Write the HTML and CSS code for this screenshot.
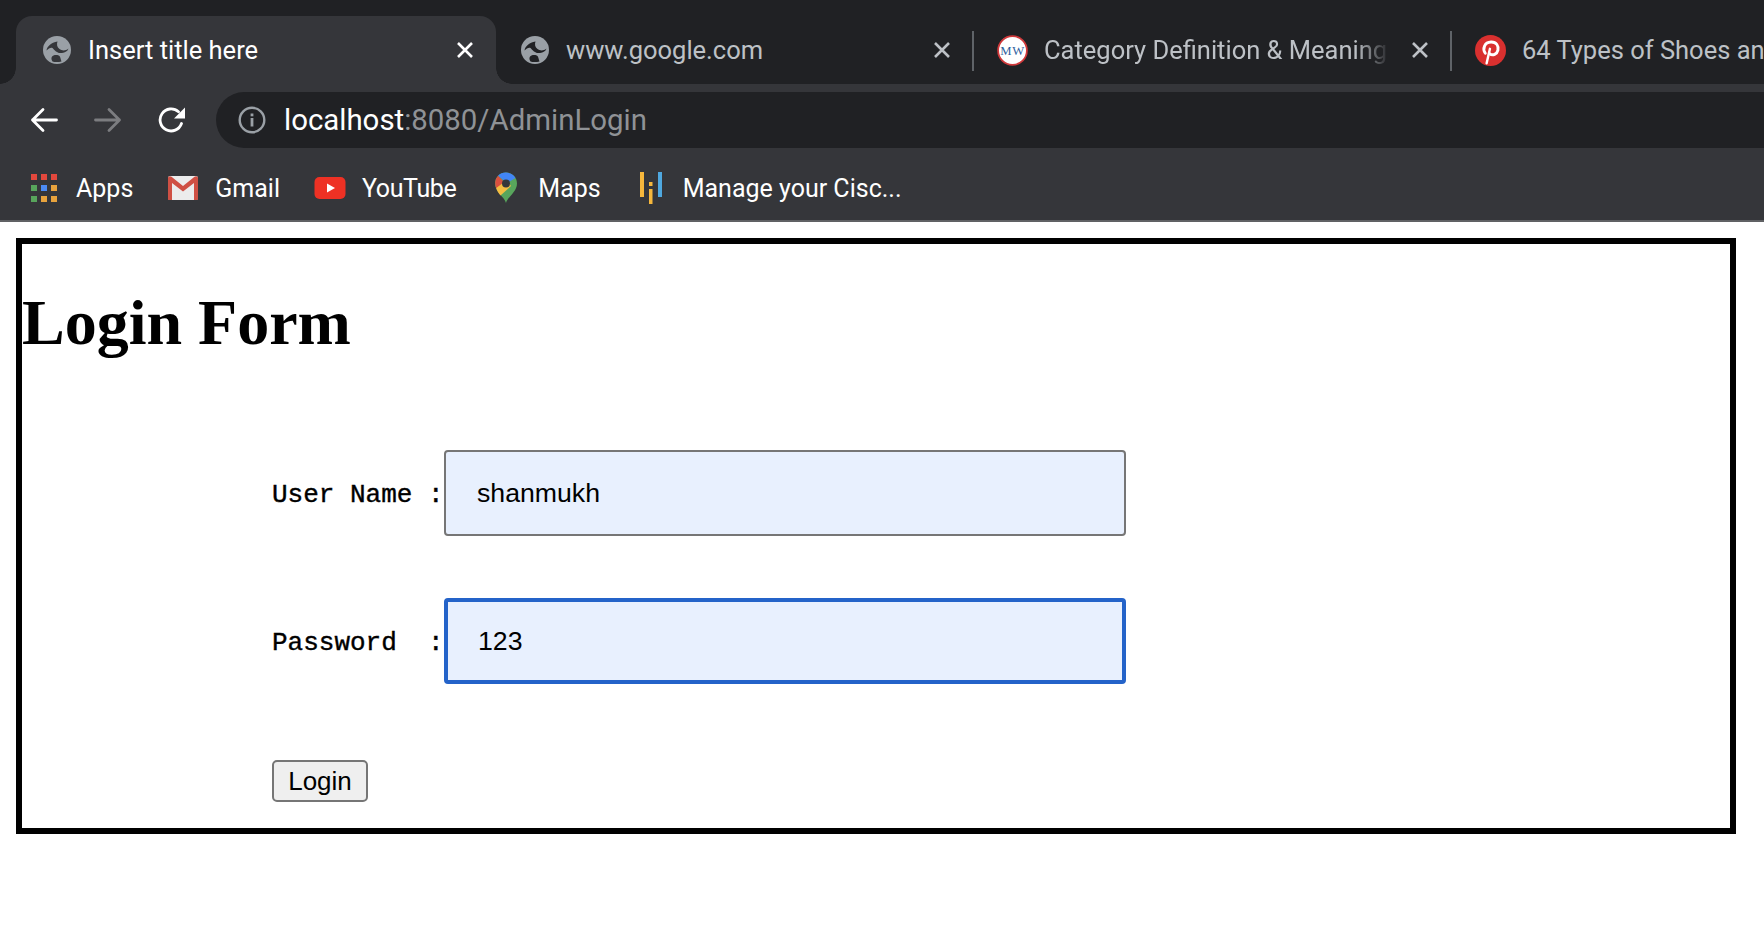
FILE: index.html
```html
<!DOCTYPE html>
<html lang="en">
<head>
    <meta charset="UTF-8">
    <meta name="viewport" content="width=device-width, initial-scale=1.0">
    <title>Insert title here</title>
    <link rel="stylesheet" href="styles.css">
</head>
<body>
    <svg class="defs" width="0" height="0">
        <symbol id="globe" viewBox="0 0 28 28">
            <circle cx="14" cy="14" r="14" fill="#9aa0a6"/>
            <path d="M3.500 14.500C4 10.500 8 6.500 14.500 5.500C13.500 8 14 11.500 16.500 13C18.500 14.500 22 15.500 25.500 12.500C25 15 22 16.500 19 17C15 17.800 11.500 14.500 9.500 12C8 11 5.500 12.500 3.500 14.500Z" fill="currentColor"/>
            <path d="M9.500 25.500C8 23 8 20.500 10.500 19.500C13 18.500 16 19.500 16.500 20C17.500 21 17.500 23 18.500 25.500C16 26 12 26.500 9.500 25.500Z" fill="currentColor"/>
        </symbol>
        <symbol id="close" viewBox="0 0 20 20">
            <path d="M3 3L17 17M17 3L3 17" fill="none" stroke="currentColor" stroke-width="2.600"/>
        </symbol>
    </svg>

    <header class="browser">
        <div class="tabstrip">
            <div class="tab tab-active">
                <svg class="favicon globe-dark-active"><use href="#globe"/></svg>
                <span class="tab-title">Insert title here</span>
                <svg class="tab-close"><use href="#close"/></svg>
            </div>
            <div class="tab tab-sep">
                <svg class="favicon globe-dark"><use href="#globe"/></svg>
                <span class="tab-title">www.google.com</span>
                <svg class="tab-close"><use href="#close"/></svg>
            </div>
            <div class="tab tab-sep">
                <svg class="favicon favicon-lg" viewBox="0 0 28 28">
                    <circle cx="14" cy="14" r="13" fill="#fff" stroke="#d0393b" stroke-width="1.600"/>
                    <text x="14" y="17.800" class="mw-text" text-anchor="middle">MW</text>
                </svg>
                <span class="tab-title tab-fade">Category Definition &amp; Meaning</span>
                <svg class="tab-close"><use href="#close"/></svg>
            </div>
            <div class="tab">
                <svg class="favicon favicon-lg" viewBox="0 0 28 28">
                    <circle cx="14" cy="14" r="14" fill="#d9302f"/>
                    <path d="M10.500 25.500L13.500 12.500" fill="none" stroke="#fff" stroke-width="2.200" stroke-linecap="round"/>
                    <path d="M9.300 16.500C6.500 12.500 8.500 6.500 14.500 6.300C19.500 6.200 21.500 10 20.700 13.700C20 17.200 16 19.200 13.200 16.800" fill="none" stroke="#fff" stroke-width="2.600" stroke-linecap="round"/>
                </svg>
                <span class="tab-title">64 Types of Shoes and</span>
            </div>
        </div>

        <div class="toolbar">
            <button class="nav-btn" type="button">
                <svg class="nav-icon" viewBox="0 0 28 28"><path d="M26.500 14H2.500M13 3.500L2.500 14L13 24.500" fill="none" stroke="#fff" stroke-width="2.800" stroke-linecap="round" stroke-linejoin="round"/></svg>
            </button>
            <button class="nav-btn" type="button">
                <svg class="nav-icon" viewBox="0 0 28 28"><path d="M1.500 14H25.500M15 3.500L25.500 14L15 24.500" fill="none" stroke="#7c7d80" stroke-width="2.800" stroke-linecap="round" stroke-linejoin="round"/></svg>
            </button>
            <button class="nav-btn" type="button">
                <svg class="nav-icon" viewBox="0 0 28 28">
                    <path d="M23.500 17.500A11 11 0 1 1 20.500 5.800" fill="none" stroke="#fff" stroke-width="2.800" stroke-linecap="round"/>
                    <path d="M27 1.500V12.500H16Z" fill="#fff"/>
                </svg>
            </button>
            <div class="omnibox">
                <svg class="info-icon" viewBox="0 0 28 28">
                    <circle cx="14" cy="14" r="12.300" fill="none" stroke="#9aa0a6" stroke-width="2.400"/>
                    <rect x="12.600" y="12" width="2.800" height="8.500" fill="#9aa0a6"/>
                    <rect x="12.600" y="7.500" width="2.800" height="2.800" fill="#9aa0a6"/>
                </svg>
                <span class="url"><span class="url-host">localhost</span>:8080/AdminLogin</span>
            </div>
        </div>

        <div class="bookmarks">
            <div class="bookmark">
                <svg class="bm-icon" viewBox="0 0 32 32">
                    <rect x="3" y="2" width="6" height="6" fill="#e2483d"/><rect x="13" y="2" width="6" height="6" fill="#e2483d"/><rect x="23" y="2" width="6" height="6" fill="#e2483d"/>
                    <rect x="3" y="13" width="6" height="6" fill="#58a55c"/><rect x="13" y="13" width="6" height="6" fill="#4c8bf5"/><rect x="23" y="13" width="6" height="6" fill="#e8a33d"/>
                    <rect x="3" y="24" width="6" height="6" fill="#58a55c"/><rect x="13" y="24" width="6" height="6" fill="#e8a33d"/><rect x="23" y="24" width="6" height="6" fill="#e8a33d"/>
                </svg>
                <span>Apps</span>
            </div>
            <div class="bookmark">
                <svg class="bm-icon" viewBox="0 0 32 32">
                    <rect x="1" y="4" width="30" height="24" rx="2" fill="#ececec"/>
                    <path d="M1 27V6C1 4.500 3 3.500 4.500 4.800L16 14L27.500 4.800C29 3.500 31 4.500 31 6V27C31 27.500 30.500 28 30 28H27V11L16 19.500L5 11V28H2C1.500 28 1 27.500 1 27Z" fill="#cf5044"/>
                </svg>
                <span>Gmail</span>
            </div>
            <div class="bookmark">
                <svg class="bm-icon" viewBox="0 0 32 32">
                    <rect x="0.500" y="5" width="31" height="22" rx="5" fill="#ee3124"/>
                    <path d="M13 11.500L21 16L13 20.500Z" fill="#fff"/>
                </svg>
                <span class="bm-tight">YouTube</span>
            </div>
            <div class="bookmark">
                <svg class="bm-icon" viewBox="0 0 32 32">
                    <path d="M16 31C14.500 25 5 20 5 11.500A11 11 0 0 1 27 11.500C27 20 17.500 25 16 31Z" fill="#58a55c"/>
                    <path d="M8 3.800A11 11 0 0 1 16 .500C20 .500 23.500 2.500 25.500 6L17 11Z" fill="#4285f4"/>
                    <path d="M8 3.800L14 10L6.800 17A11 11 0 0 1 8 3.800Z" fill="#d9503f"/>
                    <path d="M6.200 16L17 8L21 14L10.500 23.500C9 21.500 7 19 6.200 16Z" fill="#f4bd42"/>
                    <circle cx="16" cy="11.500" r="4" fill="#35363a"/>
                </svg>
                <span>Maps</span>
            </div>
            <div class="bookmark">
                <svg class="bm-icon" viewBox="0 0 32 32">
                    <rect x="5" y="0" width="4" height="25" fill="#f6b73c"/>
                    <rect x="14" y="10" width="3.500" height="4" fill="#f6b73c"/>
                    <rect x="14" y="17" width="3.500" height="15" fill="#f6b73c"/>
                    <rect x="23" y="0" width="4" height="25" fill="#4fa8df"/>
                </svg>
                <span>Manage your Cisc...</span>
            </div>
        </div>
    </header>

    <main class="page">
        <div class="login-box">
            <h1>Login Form</h1>
            <form class="login-form">
                <div class="form-row row-user">
                    <label class="form-label" for="user">User Name :</label>
                    <input class="form-input" id="user" type="text" value="shanmukh">
                </div>
                <div class="form-row row-pass">
                    <label class="form-label" for="pass">Password  :</label>
                    <input class="form-input form-input-focus" id="pass" type="text" value="123">
                </div>
                <button class="login-btn" type="button">Login</button>
            </form>
        </div>
    </main>
</body>
</html>
```

FILE: styles.css
```css
* {
    box-sizing: border-box;
}
body {
    margin: 0;
    background: #fff;
    overflow: hidden;
}
.defs {
    position: absolute;
}
.browser {
    font-family: Roboto, "Liberation Sans", sans-serif;
    color: #fff;
    overflow: hidden;
}

/* tabs */
.tabstrip {
    display: flex;
    height: 84px;
    padding: 16px 0 0 16px;
    background: #202124;
    overflow: hidden;
}
.tab {
    position: relative;
    flex: 0 0 478px;
    display: flex;
    align-items: center;
    padding: 0 21px 0 26px;
    color: #bdc1c6;
}
.tab-active {
    flex-basis: 480px;
    margin-right: -1px;
    padding-left: 27px;
    background: #35363a;
    border-radius: 16px 16px 0 0;
    color: #fff;
}
.tab-active::before,
.tab-active::after {
    content: "";
    position: absolute;
    bottom: 0;
    width: 16px;
    height: 16px;
}
.tab-active::before {
    left: -16px;
    background: radial-gradient(circle at 0 0, transparent 15.500px, #35363a 16px);
}
.tab-active::after {
    right: -16px;
    background: radial-gradient(circle at 100% 0, transparent 15.500px, #35363a 16px);
}
.tab-sep::after {
    content: "";
    position: absolute;
    right: -1px;
    top: 15px;
    width: 2px;
    height: 40px;
    background: #5f6368;
}
.favicon {
    flex: none;
    width: 28px;
    height: 28px;
    margin-right: 17px;
}
.favicon-lg {
    width: 31px;
    height: 31px;
    margin: 0 16px 0 -2px;
}
.globe-dark-active {
    color: #35363a;
}
.globe-dark {
    color: #202124;
}
.mw-text {
    font-family: "Liberation Serif", serif;
    font-size: 11.500px;
    letter-spacing: 0.500px;
    fill: #2f5f9e;
}
.tab-title {
    flex: 1;
    min-width: 0;
    font-size: 25.500px;
    white-space: nowrap;
    overflow: hidden;
}
.tab-fade {
    -webkit-mask-image: linear-gradient(to right, #000 90%, transparent 100%);
    mask-image: linear-gradient(to right, #000 90%, transparent 100%);
}
.tab-close {
    flex: none;
    width: 20px;
    height: 20px;
    margin-left: 20px;
}

/* toolbar */
.toolbar {
    display: flex;
    align-items: center;
    height: 64px;
    padding: 8px 0 0 12px;
    background: #35363a;
}
.nav-btn {
    flex: none;
    display: flex;
    justify-content: center;
    width: 64px;
    padding: 0;
    background: none;
    border: none;
}
.nav-icon {
    width: 28px;
    height: 28px;
}
.omnibox {
    flex: 1;
    display: flex;
    align-items: center;
    gap: 18px;
    height: 56px;
    margin: 0 -40px 0 12px;
    padding-left: 22px;
    background: #202124;
    border-radius: 28px;
}
.info-icon {
    width: 28px;
    height: 28px;
}
.url {
    font-size: 29.400px;
    color: #8f9296;
}
.url-host {
    color: #fff;
}

/* bookmarks */
.bookmarks {
    display: flex;
    align-items: center;
    gap: 34px;
    height: 74px;
    padding: 8px 0 0 28px;
    background: #35363a;
    border-bottom: 2px solid #606164;
    font-size: 25px;
}
.bookmark {
    display: flex;
    align-items: center;
    gap: 16px;
}
.bm-icon {
    width: 32px;
    height: 32px;
}
.bm-tight {
    letter-spacing: -0.400px;
}

/* page */
.page {
    padding: 16px;
}
.login-box {
    width: 1720px;
    height: 596px;
    border: 6px solid #000;
    font-family: "Liberation Serif", serif;
}
.login-box h1 {
    margin: 42px 0 0;
    font-size: 64px;
}
.login-form {
    padding: 90px 0 0 250px;
}
.form-row {
    display: flex;
    align-items: center;
}
.row-user {
    margin-bottom: 62px;
}
.row-pass {
    margin-bottom: 76px;
}
.form-label {
    flex: none;
    width: 172px;
    padding-top: 4px;
    font-family: "Liberation Mono", monospace;
    font-size: 26px;
    white-space: pre;
    -webkit-text-stroke: 0.400px #000;
}
.form-input {
    width: 682px;
    height: 86px;
    padding: 0 0 0 31px;
    background: #e8f0fe;
    border: 2px solid #767676;
    border-radius: 4px;
    font-family: "Liberation Sans", sans-serif;
    font-size: 26.670px;
    color: #000;
    outline: none;
}
.form-input-focus {
    padding-left: 30px;
    border: 4px solid #2463c9;
}
.login-btn {
    display: block;
    width: 96px;
    height: 42px;
    padding: 0;
    background: #efefef;
    border: 2px solid #767676;
    border-radius: 5px;
    font-family: "Liberation Sans", sans-serif;
    font-size: 26px;
    color: #000;
}
```
